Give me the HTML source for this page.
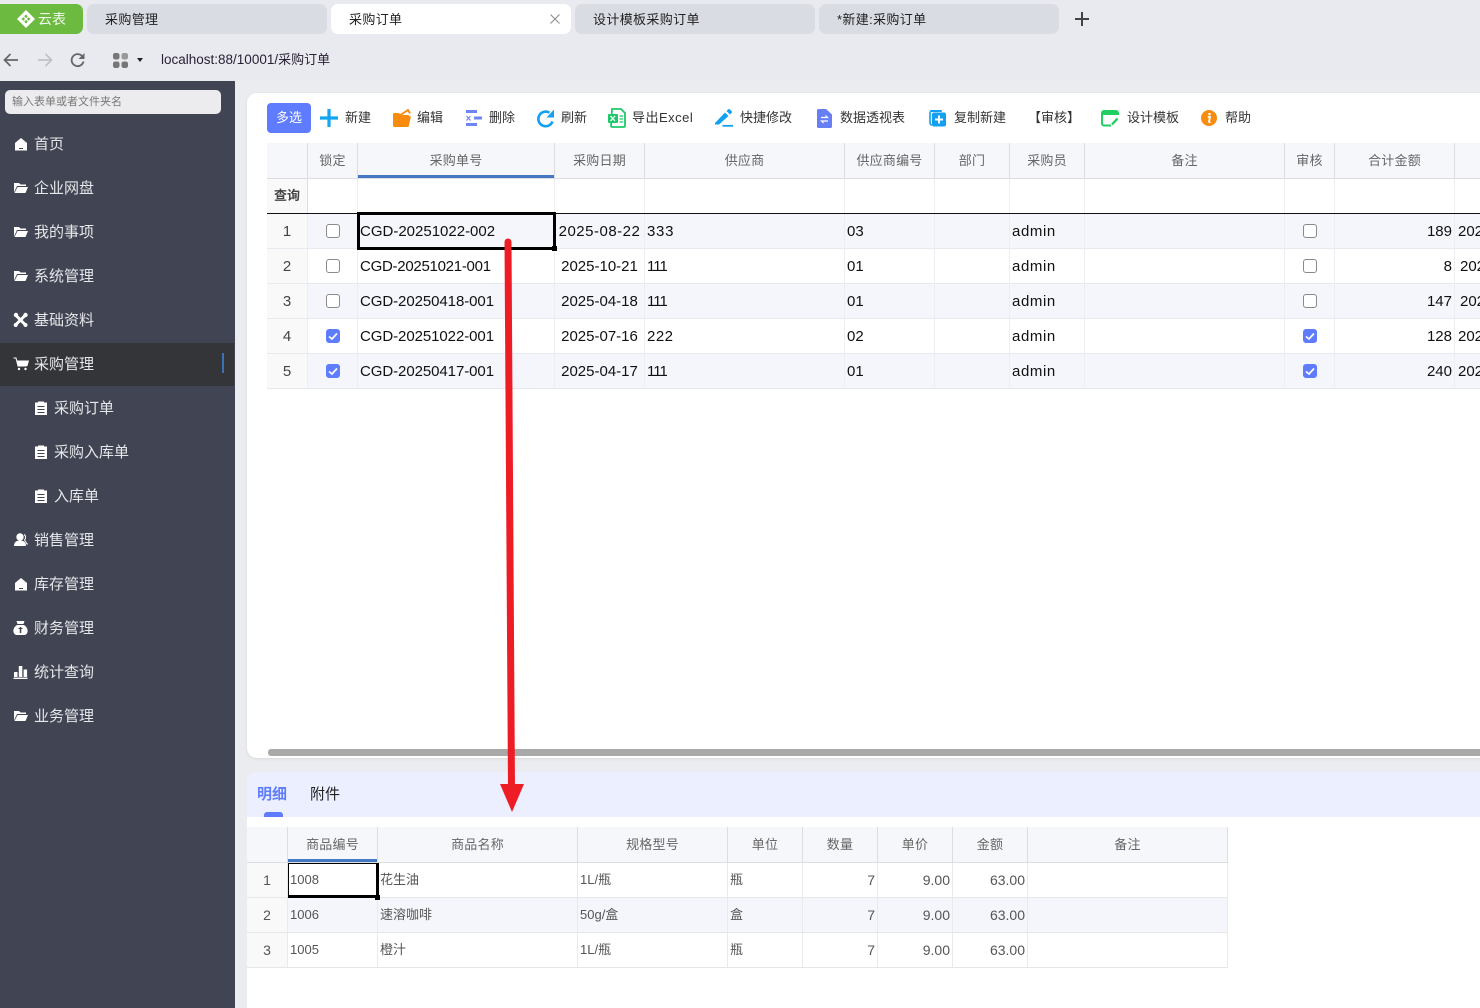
<!DOCTYPE html>
<html lang="zh-CN">
<head>
<meta charset="utf-8">
<title>采购订单</title>
<style>
html,body{margin:0;padding:0;overflow:hidden;width:1480px;height:1008px}
body{position:relative;background:#e9eaef;font-family:"Liberation Sans","Noto Sans CJK SC",sans-serif;color:#222}
div,span,svg{position:absolute;box-sizing:border-box}
.t{white-space:nowrap}
.tab{top:4px;width:240px;height:30px;background:#dadce4;border-radius:7px;font-size:13px;line-height:31px;color:#222;padding-left:18px;letter-spacing:.35px}
.m{left:0;width:235px;height:44px;color:#e6e7ea;font-size:15px;line-height:46px}
.m .t{left:34px;top:0}
.m.s .t{left:54px}
.m svg{left:13px;top:14px}
.m.s svg{left:34px}
.b{top:108px;font-size:13px;line-height:20px;color:#333;white-space:nowrap}
.hd{left:0;top:0;height:36px;font-size:13px;line-height:35px;color:#666;text-align:center;letter-spacing:.2px;background:#f6f7fb;border-right:1px solid #dcdde3;border-bottom:1px solid #dcdde3}
.q{top:0;height:34px;border-right:1px solid #efeff2}
.r{left:0;height:35px;width:1480px;border-bottom:1px solid #e8e9ee;clip-path:inset(0 0 0 267px)}
.r.a{background:#f5f6fb}
.r>span{top:0;height:34px;line-height:35px;font-size:15px;color:#111;white-space:nowrap;overflow:hidden}
.r>i{position:absolute;top:0;width:1px;height:34px;background:#edeef1}
.n{left:267px;width:40px;text-align:center;color:#444!important;background:#f9f9fa}
.cb{left:326px;top:10px!important;width:14px!important;height:14px!important;border:1px solid #8a8a8a;border-radius:3px;background:#fff}
.cb2{left:1303px}
.ck{background:#5f7cff;border-color:#5f7cff}
.ck svg{left:0;top:0}
.id{left:360px}.dt{left:555px;width:89px;text-align:center}.sp{left:647px}.sn{left:847px}.bu{left:1012px;letter-spacing:.6px}
.am{left:1334px;width:118px;text-align:right}
.o{letter-spacing:-1px}
.d{left:0;height:35px;width:1228px;border-bottom:1px solid #e6e7ea;clip-path:inset(0 0 0 247px)}
.d.a{background:#f5f6fb}
.d>span{top:0;height:34px;line-height:34px;font-size:13px;color:#555;white-space:nowrap}
.d>i{position:absolute;top:0;width:1px;height:34px;background:#e9eaee}
.dn{left:247px;width:40px;text-align:center;background:#f9f9fa;font-size:14px!important}
.r2{text-align:right;font-size:14px!important}
</style>
</head>
<body>

<!-- browser tabs -->
<div style="left:0;top:4px;width:83px;height:30px;background:#6cbb40;border-radius:0 7px 7px 0"></div>
<svg style="left:17px;top:10px" width="18" height="18" viewBox="0 0 18 18"><path d="M9 0 18 9 9 18 0 9Z" fill="#fff"/><path d="M9 4.500 10.800 6.300 9 8.100 7.200 6.300ZM4.500 9 6.300 7.200 8.100 9 6.300 10.800ZM13.500 9 11.700 10.800 9.900 9 11.700 7.200ZM9 13.500 7.200 11.700 9 9.900 10.800 11.700Z" fill="#6cbb40"/></svg>
<div class="t" style="left:38px;top:4px;font-size:14px;line-height:31px;color:#f2f8ec">云表</div>
<div class="tab" style="left:87px">采购管理</div>
<div class="tab" style="left:331px;background:#fff">采购订单</div>
<svg style="left:550px;top:14px" width="10" height="10" viewBox="0 0 10 10"><path d="M.5.5l9 9M9.500.5l-9 9" stroke="#888" stroke-width="1" fill="none"/></svg>
<div class="tab" style="left:575px">设计模板采购订单</div>
<div class="tab" style="left:819px">*新建:采购订单</div>
<svg style="left:1074px;top:11px" width="16" height="16" viewBox="0 0 16 16"><path d="M8 1v14M1 8h14" stroke="#444" stroke-width="2" fill="none"/></svg>

<!-- address bar -->
<svg style="left:3px;top:52px" width="16" height="16" viewBox="0 0 16 16"><path d="M15 8H1.500M7.500 2 1.500 8l6 6" stroke="#666" stroke-width="1.700" fill="none"/></svg>
<svg style="left:37px;top:52px" width="16" height="16" viewBox="0 0 16 16"><path d="M1 8h13.500M8.500 2l6 6-6 6" stroke="#bfc1c6" stroke-width="1.700" fill="none"/></svg>
<svg style="left:70px;top:52px" width="16" height="16" viewBox="0 0 16 16"><path d="M13.500 9.500A6 6 0 1 1 12 4" stroke="#666" stroke-width="1.800" fill="none"/><path d="M14.500 1v6h-6Z" fill="#666"/></svg>
<svg style="left:113px;top:53px" width="15" height="15" viewBox="0 0 15 15"><rect x="0" y="0" width="6.500" height="6.500" rx="2.200" fill="#777"/><rect x="8.500" y="0" width="6.500" height="6.500" rx="2.200" fill="#999"/><rect x="0" y="8.500" width="6.500" height="6.500" rx="2.200" fill="#777"/><rect x="8.500" y="8.500" width="6.500" height="6.500" rx="2.200" fill="#777"/></svg>
<svg style="left:137px;top:58px" width="6" height="4" viewBox="0 0 6 4"><path d="M0 0h6L3 4Z" fill="#222"/></svg>
<div class="t" style="left:161px;top:50px;font-size:13.500px;line-height:20px;color:#2a2035">localhost:88/10001/<span style="position:static;font-size:13px">采购订单</span></div>

<!-- content bg -->
<div style="left:235px;top:81px;width:1245px;height:927px;background:#ebecef"></div>

<!-- sidebar -->
<div style="left:0;top:81px;width:235px;height:927px;background:#414452"></div>
<div class="t" style="left:5px;top:90px;width:216px;height:24px;background:#ececee;border-radius:5px;font-size:11px;line-height:25px;color:#777;padding-left:7px">输入表单或者文件夹名</div>

<div class="m" style="top:122px"><svg style="left:14px" width="14" height="16" viewBox="0 0 14 16"><path d="M1 7 7 2l6 5v7.500H1Z" fill="#fff"/><path d="M5 12.500h4" stroke="#414452" stroke-width="1"/></svg><span class="t">首页</span></div>
<div class="m" style="top:166px"><svg width="15" height="16" viewBox="0 0 15 16"><path d="M1 3h5l1.500 1.500H13V6H4L1 12.500Z" fill="#fff"/><path d="M4.500 7H15l-2.500 6H1.500Z" fill="#fff"/></svg><span class="t">企业网盘</span></div>
<div class="m" style="top:210px"><svg width="15" height="16" viewBox="0 0 15 16"><path d="M1 3h5l1.500 1.500H13V6H4L1 12.500Z" fill="#fff"/><path d="M4.500 7H15l-2.500 6H1.500Z" fill="#fff"/></svg><span class="t">我的事项</span></div>
<div class="m" style="top:254px"><svg width="15" height="16" viewBox="0 0 15 16"><path d="M1 3h5l1.500 1.500H13V6H4L1 12.500Z" fill="#fff"/><path d="M4.500 7H15l-2.500 6H1.500Z" fill="#fff"/></svg><span class="t">系统管理</span></div>
<div class="m" style="top:298px"><svg width="15" height="16" viewBox="0 0 15 16"><path d="M2 2.500 13 13.500M13 2.500 2 13.500" stroke="#fff" stroke-width="3" fill="none"/><circle cx="3" cy="3" r="2.200" fill="#fff"/><circle cx="12.500" cy="3" r="2.200" fill="#fff"/><circle cx="2.700" cy="13" r="2" fill="#fff"/><circle cx="12.500" cy="13" r="2" fill="#fff"/></svg><span class="t">基础资料</span></div>
<div class="m" style="top:343px;height:43px;background:#343539;width:234px"><svg style="top:13px" width="16" height="16" viewBox="0 0 16 16"><path d="M.5 2H3l2 8h8.500" stroke="#fff" stroke-width="1" fill="none"/><path d="M3.500 4.500H16L14.500 10H5Z" fill="#fff"/><circle cx="6" cy="13" r="1.200" fill="#fff"/><circle cx="12.500" cy="13" r="1.200" fill="#fff"/></svg><span class="t" style="top:-1px">采购管理</span><div style="left:222px;top:10px;width:2px;height:20px;background:#3d6fb5"></div></div>
<div class="m s" style="top:386px"><svg width="14" height="16" viewBox="0 0 14 16"><path d="M1 2.500h3V1.500h6v1h3V15H1Z" fill="#fff"/><path d="M3.500 6.500h7M3.500 9.500h7M3.500 12.500h7" stroke="#414452" stroke-width="1.100"/></svg><span class="t">采购订单</span></div>
<div class="m s" style="top:430px"><svg width="14" height="16" viewBox="0 0 14 16"><path d="M1 2.500h3V1.500h6v1h3V15H1Z" fill="#fff"/><path d="M3.500 6.500h7M3.500 9.500h7M3.500 12.500h7" stroke="#414452" stroke-width="1.100"/></svg><span class="t">采购入库单</span></div>
<div class="m s" style="top:474px"><svg width="14" height="16" viewBox="0 0 14 16"><path d="M1 2.500h3V1.500h6v1h3V15H1Z" fill="#fff"/><path d="M3.500 6.500h7M3.500 9.500h7M3.500 12.500h7" stroke="#414452" stroke-width="1.100"/></svg><span class="t">入库单</span></div>
<div class="m" style="top:518px"><svg width="15" height="16" viewBox="0 0 15 16"><circle cx="7" cy="5" r="3.700" fill="#fff"/><path d="M1 14c0-4 2.500-5.500 6-5.500S13 10 13 14Z" fill="#fff"/><path d="M11 2.500c2 1 2 4 .5 5.500l2.500 4h1" stroke="#fff" stroke-width="1" fill="none"/></svg><span class="t">销售管理</span></div>
<div class="m" style="top:562px"><svg style="left:14px" width="14" height="16" viewBox="0 0 14 16"><path d="M1 7 7 2l6 5v7.500H1Z" fill="#fff"/><path d="M5 12.500h4" stroke="#414452" stroke-width="1"/></svg><span class="t">库存管理</span></div>
<div class="m" style="top:606px"><svg width="15" height="16" viewBox="0 0 15 16"><path d="M3.500 1h8l-1 3h-6Z" fill="#fff"/><path d="M4 5h7c3 2 4 4.500 3.500 7-.4 2-2 3-3.500 3H4c-1.500 0-3.100-1-3.500-3C0 9.500 1 7 4 5Z" fill="#fff"/><path d="M7.500 7v6" stroke="#414452" stroke-width="1.500"/><path d="M5.500 8.500h4" stroke="#414452" stroke-width="1"/></svg><span class="t">财务管理</span></div>
<div class="m" style="top:650px"><svg width="15" height="16" viewBox="0 0 15 16"><path d="M1 8h3.500v5H1ZM5.800 2h3.500v11H5.800ZM10.600 5.500h3.500V13h-3.500Z" fill="#fff"/><path d="M.5 14.300h14" stroke="#fff" stroke-width="1.400"/></svg><span class="t">统计查询</span></div>
<div class="m" style="top:694px"><svg width="15" height="16" viewBox="0 0 15 16"><path d="M1 3h5l1.500 1.500H13V6H4L1 12.500Z" fill="#fff"/><path d="M4.500 7H15l-2.500 6H1.500Z" fill="#fff"/></svg><span class="t">业务管理</span></div>

<!-- main panel -->
<div style="left:247px;top:93px;width:1233px;height:665px;background:#fff;border-radius:10px 0 0 10px;box-shadow:0 1px 3px rgba(0,0,0,.08)"></div>

<!-- toolbar -->
<div style="left:267px;top:103px;width:44px;height:30px;background:#5f7cff;border-radius:4px;color:#fff;font-size:13px;line-height:30px;text-align:center">多选</div>
<svg style="left:320px;top:109px" width="18" height="18" viewBox="0 0 18 18"><path d="M9 0v18M0 9h18" stroke="#12a5f2" stroke-width="3.200" fill="none"/></svg>
<div class="b" style="left:345px">新建</div>
<svg style="left:393px;top:109px" width="18" height="18" viewBox="0 0 18 18"><path d="M0 5.500q0-1.500 1.500-1.500H6l1.500 2H15q1.500 0 1.500 1.500L18 7.500 15.500 18H1.500Q0 18 0 16.500Z" fill="#f98b0e"/><path d="M6.500 6.500 15 1l2 3.500" stroke="#f98b0e" stroke-width="1.800" fill="none"/></svg>
<div class="b" style="left:417px">编辑</div>
<svg style="left:465px;top:109px" width="18" height="18" viewBox="0 0 18 18"><path d="M1 2.500h11M9 9h8M1 15.500h11" stroke="#6e85f5" stroke-width="3" fill="none"/><path d="M1.500 7l4 4.500M5.500 7l-4 4.500" stroke="#6e85f5" stroke-width="1.200" fill="none"/></svg>
<div class="b" style="left:489px">删除</div>
<svg style="left:537px;top:109px" width="18" height="19" viewBox="0 0 18 19"><path d="M15.500 12.500A7.300 7.300 0 1 1 12.500 3.700" stroke="#12a0f0" stroke-width="2.600" fill="none"/><path d="M17 .5V8.500H9.500Z" fill="#12a0f0"/></svg>
<div class="b" style="left:561px">刷新</div>
<svg style="left:608px;top:108px" width="18" height="20" viewBox="0 0 18 20"><path d="M4 1h9l4 4v13a1 1 0 0 1-1 1H4a1 1 0 0 1-1-1Z" fill="#fff" stroke="#1fc96a" stroke-width="1.800"/><rect x="0" y="6" width="10" height="9" rx="1" fill="#1fc96a"/><path d="M2.500 8l4.500 5M7 8l-4.500 5" stroke="#fff" stroke-width="1.300"/><path d="M11.500 8h3.500M11.500 11h3.500M11.500 14h3.500" stroke="#1fc96a" stroke-width="1.200"/></svg>
<div class="b" style="left:632px;letter-spacing:.5px">导出Excel</div>
<svg style="left:715px;top:109px" width="18" height="18" viewBox="0 0 18 18"><path d="M0 14 10 3.500l3.500 3.500L4 15.500H0Z" fill="#12a0f0"/><path d="M11.500 2 13.300.3a1 1 0 0 1 1.400 0l2 2a1 1 0 0 1 0 1.400L15 5.500Z" fill="#12a0f0"/><path d="M7.500 16.800H18" stroke="#12a0f0" stroke-width="1.800"/></svg>
<div class="b" style="left:740px">快捷修改</div>
<svg style="left:817px;top:109px" width="15" height="19" viewBox="0 0 15 19"><path d="M1.500 0H9l6 5.500V17.500A1.500 1.500 0 0 1 13.500 19h-12A1.500 1.500 0 0 1 0 17.500V1.500A1.500 1.500 0 0 1 1.500 0Z" fill="#667ff5"/><path d="M4 8.500h6.500L8.500 6.500M11 12H4.500l2 2" stroke="#fff" stroke-width="1.200" fill="none"/></svg>
<div class="b" style="left:840px">数据透视表</div>
<svg style="left:929px;top:109px" width="17" height="18" viewBox="0 0 17 18"><path d="M1 2.500V14a2 2 0 0 0 2 2" stroke="#12a0f0" stroke-width="1.600" fill="none"/><rect x="1" y="1" width="12" height="2" rx="1" fill="#12a0f0"/><rect x="3" y="3.500" width="14" height="14" rx="2" fill="#12a0f0"/><path d="M10 6.500v8M6 10.500h8" stroke="#fff" stroke-width="2"/></svg>
<div class="b" style="left:954px">复制新建</div>
<div class="b" style="left:1028px;width:60px">【审核】</div>
<svg style="left:1101px;top:110px" width="18" height="17" viewBox="0 0 18 17"><path d="M10 15.500H3A2 2 0 0 1 1 13.500V3A2 2 0 0 1 3 1h12a2 2 0 0 1 2 2v2" fill="none" stroke="#1fcf62" stroke-width="2"/><path d="M1 2h16v3H1Z" fill="#1fcf62"/><path d="M11 14.500l5.500-6" stroke="#1fcf62" stroke-width="2.400" fill="none"/></svg>
<div class="b" style="left:1127px">设计模板</div>
<svg style="left:1201px;top:110px" width="16" height="16" viewBox="0 0 16 16"><circle cx="8" cy="8" r="8" fill="#f98b0e"/><path d="M8.500 3v2.200" stroke="#fff" stroke-width="2.200"/><path d="M6.800 7H9L8 11.500q0 1 1.500.5" stroke="#fff" stroke-width="1.800" fill="none"/></svg>
<div class="b" style="left:1225px">帮助</div>

<!-- main grid header -->
<div style="left:0;top:143px;width:1480px;height:36px">
<div class="hd" style="left:267px;width:41px"></div>
<div class="hd" style="left:308px;width:50px">锁定</div>
<div class="hd" style="left:358px;width:197px">采购单号<div style="left:0;top:32px;width:196px;height:3px;background:#4478c0"></div></div>
<div class="hd" style="left:555px;width:90px">采购日期</div>
<div class="hd" style="left:645px;width:200px">供应商</div>
<div class="hd" style="left:845px;width:90px">供应商编号</div>
<div class="hd" style="left:935px;width:75px">部门</div>
<div class="hd" style="left:1010px;width:75px">采购员</div>
<div class="hd" style="left:1085px;width:200px">备注</div>
<div class="hd" style="left:1285px;width:50px">审核</div>
<div class="hd" style="left:1335px;width:120px">合计金额</div>
<div class="hd" style="left:1455px;width:25px;border-right:0"></div>
</div>

<!-- query row -->
<div style="left:0;top:179px;width:1480px;height:34px">
<div class="q" style="left:267px;width:41px;background:#f9f9fa;border-right:1px solid #dcdde3;font-size:13px;font-weight:bold;line-height:34px;text-align:center;color:#444">查询</div>
<div class="q" style="left:308px;width:50px"></div>
<div class="q" style="left:358px;width:197px"></div>
<div class="q" style="left:555px;width:90px"></div>
<div class="q" style="left:645px;width:200px"></div>
<div class="q" style="left:845px;width:90px"></div>
<div class="q" style="left:935px;width:75px"></div>
<div class="q" style="left:1010px;width:75px"></div>
<div class="q" style="left:1085px;width:200px"></div>
<div class="q" style="left:1285px;width:50px"></div>
<div class="q" style="left:1335px;width:120px"></div>
</div>
<div style="left:267px;top:213px;width:1213px;height:1px;background:#111"></div>

<!-- rows -->
<div class="r a" style="top:214px"><i style="left:307px"></i><i style="left:357px"></i><i style="left:554px"></i><i style="left:644px"></i><i style="left:844px"></i><i style="left:934px"></i><i style="left:1009px"></i><i style="left:1084px"></i><i style="left:1284px"></i><i style="left:1334px"></i><i style="left:1454px"></i>
<span class="n">1</span><span class="cb"></span><span class="id">CGD-20251022-002</span><span class="dt" style="letter-spacing:.5px">2025-08-22</span><span class="sp" style="letter-spacing:.7px">333</span><span class="sn">03</span><span class="bu">admin</span><span class="cb cb2"></span><span class="am">189</span><span style="left:1458px">2025</span></div>
<div class="r" style="top:249px"><i style="left:307px"></i><i style="left:357px"></i><i style="left:554px"></i><i style="left:644px"></i><i style="left:844px"></i><i style="left:934px"></i><i style="left:1009px"></i><i style="left:1084px"></i><i style="left:1284px"></i><i style="left:1334px"></i><i style="left:1454px"></i>
<span class="n">2</span><span class="cb"></span><span class="id" style="letter-spacing:-.27px">CGD-20251021-001</span><span class="dt">2025-10-21</span><span class="sp o">111</span><span class="sn">01</span><span class="bu">admin</span><span class="cb cb2"></span><span class="am">8</span><span style="left:1460px">2025</span></div>
<div class="r a" style="top:284px"><i style="left:307px"></i><i style="left:357px"></i><i style="left:554px"></i><i style="left:644px"></i><i style="left:844px"></i><i style="left:934px"></i><i style="left:1009px"></i><i style="left:1084px"></i><i style="left:1284px"></i><i style="left:1334px"></i><i style="left:1454px"></i>
<span class="n">3</span><span class="cb"></span><span class="id" style="letter-spacing:-.07px">CGD-20250418-001</span><span class="dt">2025-04-18</span><span class="sp o">111</span><span class="sn">01</span><span class="bu">admin</span><span class="cb cb2"></span><span class="am">147</span><span style="left:1460px">2025</span></div>
<div class="r" style="top:319px"><i style="left:307px"></i><i style="left:357px"></i><i style="left:554px"></i><i style="left:644px"></i><i style="left:844px"></i><i style="left:934px"></i><i style="left:1009px"></i><i style="left:1084px"></i><i style="left:1284px"></i><i style="left:1334px"></i><i style="left:1454px"></i>
<span class="n">4</span><span class="cb ck"><svg width="12" height="12" viewBox="0 0 12 12"><path d="M2 6.500 5 9l5-5.500" stroke="#fff" stroke-width="1.700" fill="none"/></svg></span><span class="id" style="letter-spacing:-.07px">CGD-20251022-001</span><span class="dt">2025-07-16</span><span class="sp" style="letter-spacing:.5px">222</span><span class="sn">02</span><span class="bu">admin</span><span class="cb cb2 ck"><svg width="12" height="12" viewBox="0 0 12 12"><path d="M2 6.500 5 9l5-5.500" stroke="#fff" stroke-width="1.700" fill="none"/></svg></span><span class="am">128</span><span style="left:1458px">2025</span></div>
<div class="r a" style="top:354px"><i style="left:307px"></i><i style="left:357px"></i><i style="left:554px"></i><i style="left:644px"></i><i style="left:844px"></i><i style="left:934px"></i><i style="left:1009px"></i><i style="left:1084px"></i><i style="left:1284px"></i><i style="left:1334px"></i><i style="left:1454px"></i>
<span class="n">5</span><span class="cb ck"><svg width="12" height="12" viewBox="0 0 12 12"><path d="M2 6.500 5 9l5-5.500" stroke="#fff" stroke-width="1.700" fill="none"/></svg></span><span class="id" style="letter-spacing:-.07px">CGD-20250417-001</span><span class="dt">2025-04-17</span><span class="sp o">111</span><span class="sn">01</span><span class="bu">admin</span><span class="cb cb2 ck"><svg width="12" height="12" viewBox="0 0 12 12"><path d="M2 6.500 5 9l5-5.500" stroke="#fff" stroke-width="1.700" fill="none"/></svg></span><span class="am">240</span><span style="left:1458px">2025</span></div>

<!-- selection -->
<div style="left:357px;top:212px;width:199px;height:38px;border:3px solid #000"></div>
<div style="left:552px;top:246px;width:5px;height:5px;background:#000"></div>

<!-- scrollbar -->
<div style="left:268px;top:749px;width:1212px;height:7px;background:#a9a9a9;border-radius:3px 0 0 3px"></div>

<!-- lower panel -->
<div style="left:247px;top:772px;width:1233px;height:236px;background:#fff;border-radius:10px 0 0 0"></div>
<div style="left:247px;top:772px;width:1233px;height:45px;background:#ebefff;border-radius:10px 0 0 0"></div>
<div class="t" style="left:257px;top:784px;font-size:15px;line-height:22px;color:#5f7cff;font-weight:bold">明细</div>
<div class="t" style="left:310px;top:784px;font-size:15px;line-height:22px;color:#222">附件</div>
<div style="left:264px;top:812px;width:19px;height:5px;background:#5f7cff;border-radius:3px 3px 0 0"></div>

<!-- detail grid -->
<div style="left:0;top:827px;width:1228px;height:36px">
<div class="hd" style="left:247px;width:41px"></div>
<div class="hd" style="left:288px;width:90px">商品编号<div style="left:0;top:32px;width:89px;height:3px;background:#4478c0"></div></div>
<div class="hd" style="left:378px;width:200px">商品名称</div>
<div class="hd" style="left:578px;width:150px">规格型号</div>
<div class="hd" style="left:728px;width:75px">单位</div>
<div class="hd" style="left:803px;width:75px">数量</div>
<div class="hd" style="left:878px;width:75px">单价</div>
<div class="hd" style="left:953px;width:75px">金额</div>
<div class="hd" style="left:1028px;width:200px">备注</div>
</div>

<div class="d" style="top:863px"><i style="left:287px"></i><i style="left:377px"></i><i style="left:577px"></i><i style="left:727px"></i><i style="left:802px"></i><i style="left:877px"></i><i style="left:952px"></i><i style="left:1027px"></i><i style="left:1227px"></i>
<span class="dn">1</span><span style="left:290px">1008</span><span style="left:380px">花生油</span><span style="left:580px">1L/瓶</span><span style="left:730px">瓶</span><span class="r2" style="left:802px;width:73px">7</span><span class="r2" style="left:877px;width:73px">9.00</span><span class="r2" style="left:952px;width:73px">63.00</span></div>
<div class="d a" style="top:898px"><i style="left:287px"></i><i style="left:377px"></i><i style="left:577px"></i><i style="left:727px"></i><i style="left:802px"></i><i style="left:877px"></i><i style="left:952px"></i><i style="left:1027px"></i><i style="left:1227px"></i>
<span class="dn">2</span><span style="left:290px">1006</span><span style="left:380px">速溶咖啡</span><span style="left:580px">50g/盒</span><span style="left:730px">盒</span><span class="r2" style="left:802px;width:73px">7</span><span class="r2" style="left:877px;width:73px">9.00</span><span class="r2" style="left:952px;width:73px">63.00</span></div>
<div class="d" style="top:933px"><i style="left:287px"></i><i style="left:377px"></i><i style="left:577px"></i><i style="left:727px"></i><i style="left:802px"></i><i style="left:877px"></i><i style="left:952px"></i><i style="left:1027px"></i><i style="left:1227px"></i>
<span class="dn">3</span><span style="left:290px">1005</span><span style="left:380px">橙汁</span><span style="left:580px">1L/瓶</span><span style="left:730px">瓶</span><span class="r2" style="left:802px;width:73px">7</span><span class="r2" style="left:877px;width:73px">9.00</span><span class="r2" style="left:952px;width:73px">63.00</span></div>

<div style="left:288px;top:863px;width:91px;height:35px;border:solid #000;border-width:1px 3px 3px 1px"></div>
<div style="left:375px;top:895px;width:5px;height:5px;background:#000"></div>

<!-- arrow -->
<svg style="left:0;top:0" width="1480" height="1008" viewBox="0 0 1480 1008"><path d="M508 242 511.500 790" stroke="#ee1c25" stroke-width="7" stroke-linecap="round" fill="none"/><path d="M500 784 524 784 512 812Z" fill="#ee1c25"/></svg>

</body>
</html>
